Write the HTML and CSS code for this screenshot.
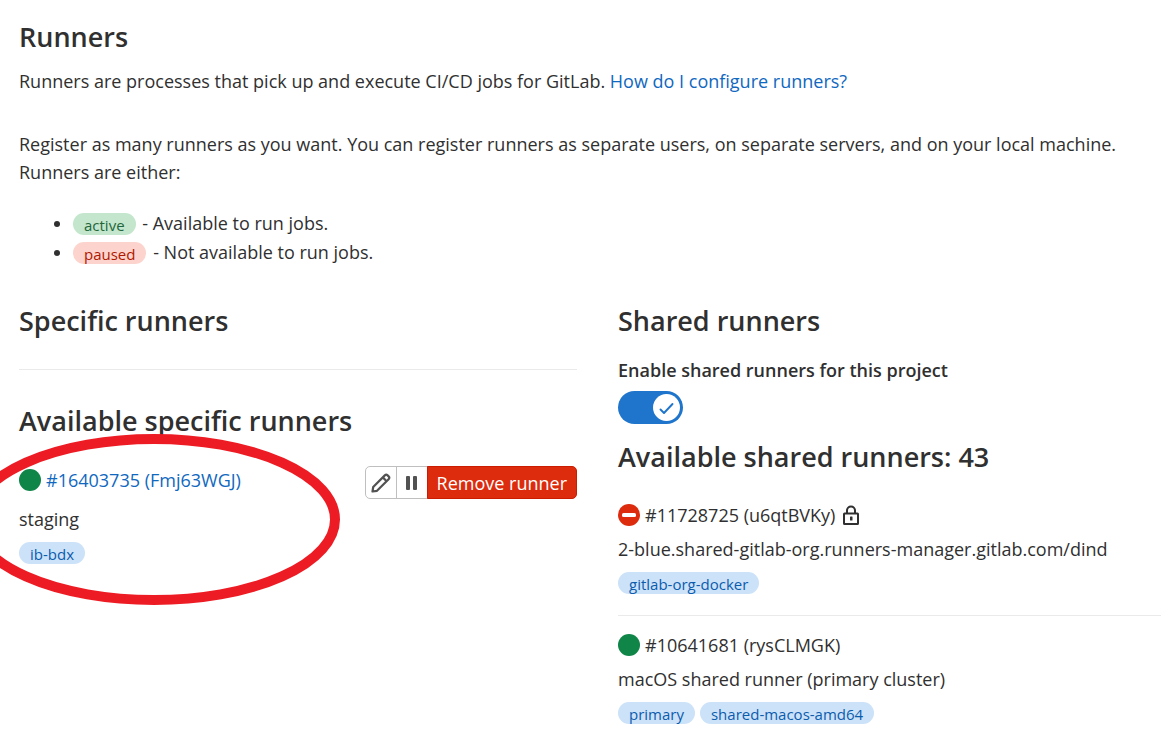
FILE: index.html
```html
<!DOCTYPE html>
<html lang="en">
<head>
<meta charset="utf-8">
<meta name="viewport" content="width=device-width, initial-scale=1">
<title>Runners</title>
<link rel="stylesheet" href="styles.css">
</head>
<body>
<main class="page">
  <header class="intro">
    <h1 class="heading">Runners</h1>
    <p class="lead">Runners are processes that pick up and execute CI/CD jobs for GitLab. <a class="link" href="#help">How do I configure runners?</a></p>
    <p class="about">Register as many runners as you want. You can register runners as separate users, on separate servers, and on your local machine. Runners are either:</p>
    <ul class="states">
      <li><span class="badge badge-success">active</span> - Available to run jobs.</li>
      <li><span class="badge badge-danger">paused</span> - Not available to run jobs.</li>
    </ul>
  </header>

  <div class="columns">
    <section class="specific">
      <h2 class="heading">Specific runners</h2>
      <hr class="rule">
      <h2 class="heading">Available specific runners</h2>
      <article class="runner-card">
        <div class="runner-info">
          <div class="runner-title"><span class="status-dot"></span><a class="link" href="#runner">#16403735 (Fmj63WGJ)</a></div>
          <p class="runner-name">staging</p>
          <div class="tags"><span class="badge badge-info">ib-bdx</span></div>
        </div>
        <div class="actions">
          <button class="btn" type="button" aria-label="Edit">
            <svg class="btn-icon" viewBox="0 0 20 20"><g fill="none" stroke="#525252" stroke-width="2.200" stroke-linejoin="round"><path d="M1.500 18.500 2.200 14 13.800 2.400a2 2 0 0 1 2.800 0l1 1a2 2 0 0 1 0 2.800L6 17.800z"/><path d="m11.800 4.400 3.800 3.800"/></g></svg>
          </button>
          <button class="btn" type="button" aria-label="Pause">
            <svg class="btn-icon" viewBox="0 0 20 20"><rect x="4" y="3" width="4" height="14" rx="1" fill="#525252"/><rect x="11" y="3" width="4" height="14" rx="1" fill="#525252"/></svg>
          </button>
          <button class="btn btn-danger" type="button">Remove runner</button>
        </div>
        <svg class="highlight" viewBox="0 0 372 171" aria-hidden="true"><ellipse cx="186" cy="85.500" rx="181" ry="80.500" fill="none" stroke="#ed1c24" stroke-width="10"/></svg>
      </article>
    </section>

    <section class="shared">
      <h2 class="heading">Shared runners</h2>
      <label class="toggle-label" for="shared-toggle">Enable shared runners for this project</label>
      <div class="toggle">
        <input class="toggle-input" id="shared-toggle" type="checkbox" role="switch" checked>
        <svg class="toggle-knob" viewBox="0 0 27 27" aria-hidden="true"><circle cx="13.500" cy="13.500" r="13.500" fill="#fff"/><path d="M7.500 15.500 11 19 19.500 10" fill="none" stroke="#1f75cb" stroke-width="1.900" stroke-linecap="round" stroke-linejoin="round"/></svg>
      </div>
      <h2 class="heading">Available shared runners: 43</h2>
      <ul class="runner-list">
        <li class="runner-item">
          <div class="runner-title">
            <svg class="status-icon" viewBox="0 0 22 22" role="img" aria-label="Offline"><circle cx="11" cy="11" r="11" fill="#dd2b0e"/><rect x="4" y="9" width="14" height="4" rx="1.500" fill="#fff"/></svg>
            <span>#11728725 (u6qtBVKy)</span>
            <svg class="lock" viewBox="0 0 18 20" role="img" aria-label="Locked"><path d="M5 8V5.500a4 4 0 0 1 8 0V8" fill="none" stroke="#303030" stroke-width="2"/><rect x="2" y="8.500" width="14" height="10.500" rx=".5" fill="none" stroke="#303030" stroke-width="2"/><rect x="8" y="11.500" width="2.500" height="4" rx=".5" fill="#303030"/></svg>
          </div>
          <p class="runner-name">2-blue.shared-gitlab-org.runners-manager.gitlab.com/dind</p>
          <div class="tags"><span class="badge badge-info">gitlab-org-docker</span></div>
        </li>
        <li class="runner-item">
          <div class="runner-title"><span class="status-dot"></span><span>#10641681 (rysCLMGK)</span></div>
          <p class="runner-name">macOS shared runner (primary cluster)</p>
          <div class="tags"><span class="badge badge-info">primary</span><span class="badge badge-info">shared-macos-amd64</span></div>
        </li>
      </ul>
    </section>
  </div>
</main>
</body>
</html>
```
FILE: styles.css
```css
* { box-sizing: border-box; }

body {
  margin: 0;
  background: #fff;
  color: #303030;
  font-family: "Segoe UI", "Open Sans", "Noto Sans", sans-serif;
  font-size: 18px;
  line-height: 28px;
}

p, ul { margin: 0; }

.page { padding: 19px 0 12px 19px; overflow-x: clip; }

.heading {
  margin: 0;
  font-size: 27px;
  font-weight: 600;
  line-height: 36px;
}

.link { color: #1068bf; text-decoration: none; }
.link:hover { text-decoration: underline; }

.lead { margin-top: 12px; }
.about { margin-top: 35px; padding-right: 40px; }

.states {
  margin-top: 23px;
  padding-left: 54px;
  line-height: 29px;
}
.states .badge { margin-right: 2px; vertical-align: -5px; }

.badge {
  display: inline-block;
  height: 22px;
  padding: 0 11px;
  border-radius: 11px;
  overflow: hidden;
  font-size: 15px;
  line-height: 24px;
}
.badge-success { background: #c3e6cd; color: #24663b; }
.badge-danger { background: #fdd4cd; color: #ae1800; }
.badge-info { background: #cbe2f9; color: #0b5cad; }

.columns {
  display: grid;
  grid-template-columns: 558fr 543fr;
  column-gap: 41px;
  margin-top: 36px;
}

.rule {
  margin: 30px 0 33px;
  border: 0;
  border-top: 1px solid #eaeaea;
}

.runner-card {
  position: relative;
  display: flex;
  justify-content: space-between;
  align-items: flex-start;
  margin-top: 27px;
}

.runner-title {
  display: flex;
  align-items: center;
  gap: 5px;
}

.status-dot {
  width: 22px;
  height: 22px;
  border-radius: 50%;
  background: #108548;
}
.status-icon { width: 22px; height: 22px; }
.lock { width: 18px; height: 20px; margin-left: 2px; }

.runner-card .runner-name { margin-top: 11px; }
.tags { display: flex; gap: 5px; margin-top: 9px; }

.actions { display: flex; }

.btn {
  display: flex;
  align-items: center;
  justify-content: center;
  width: 32px;
  height: 33px;
  margin-right: -1px;
  padding: 0;
  border: 1px solid #bfbfbf;
  background: #fff;
  font: inherit;
}
.btn:first-child { border-radius: 5px 0 0 5px; }
.btn-icon { width: 20px; height: 20px; }

.btn-danger {
  width: auto;
  margin-right: 0;
  padding: 0 9px;
  border-color: #c91c00;
  border-radius: 0 5px 5px 0;
  background: #dd2b0e;
  color: #fff;
}

/* Hand-drawn emphasis ring laid over the runner */
.highlight {
  position: absolute;
  top: -32px;
  left: -51px;
  width: 372px;
  height: 171px;
  pointer-events: none;
}

.toggle-label {
  display: block;
  margin-top: 17px;
  font-weight: 600;
}

.toggle {
  position: relative;
  width: 65px;
  height: 33px;
  margin: 7px 0 15px;
}
.toggle-input {
  appearance: none;
  display: block;
  width: 100%;
  height: 100%;
  margin: 0;
  border-radius: 17px;
  background: #1f75cb;
}
.toggle-knob {
  position: absolute;
  top: 3px;
  right: 3px;
  width: 27px;
  height: 27px;
  pointer-events: none;
}

.runner-list { margin-top: 26px; padding: 0; list-style: none; }
.runner-item .runner-name { margin-top: 6px; }
.runner-item + .runner-item {
  margin-top: 21px;
  padding-top: 15px;
  border-top: 1px solid #eaeaea;
}
```
